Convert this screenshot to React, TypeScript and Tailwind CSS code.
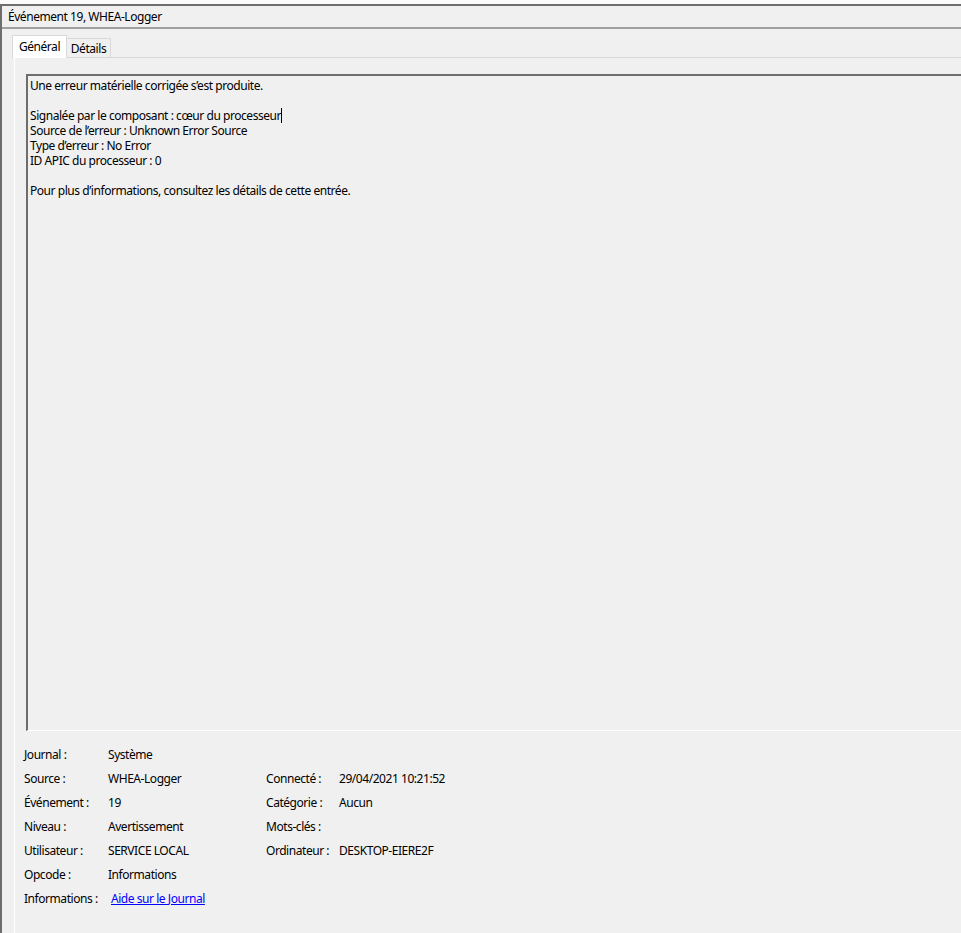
import React from "react";

const font = { fontFamily: '"Noto Sans", "Liberation Sans", sans-serif' };

const rows: [string, React.ReactNode, string?, string?][] = [
  ["Journal :", "Système"],
  ["Source :", "WHEA-Logger", "Connecté :", "29/04/2021 10:21:52"],
  ["Événement :", "19", "Catégorie :", "Aucun"],
  ["Niveau :", "Avertissement", "Mots-clés :", ""],
  ["Utilisateur :", "SERVICE LOCAL", "Ordinateur :", "DESKTOP-EIERE2F"],
  ["Opcode :", "Informations"],
  [
    "Informations :",
    <a href="#" className="ml-[3px] text-[#0000ff] underline">
      Aide sur le Journal
    </a>,
  ],
];

export default function App() {
  return (
    <div
      className="w-[961px] h-[933px] overflow-hidden bg-[#fbfbfb] pt-[4px] text-[12px] leading-[15px] tracking-[-0.45px] text-black"
      style={font}
    >
      <div className="h-[929px] border-t-2 border-l-2 border-[#6e6e6e] bg-[#f0f0f0] flex flex-col">
        {/* Titre */}
        <div className="h-[23px] shrink-0 border-b-2 border-[#a0a0a0] pl-[6px] flex items-center">
          Événement 19, WHEA-Logger
        </div>

        {/* Onglets */}
        <div className="h-[28px] shrink-0 flex items-end pl-[10px]">
          <div className="relative z-10 h-[23px] w-[55px] -mb-px bg-white border-l border-t border-r border-[#d9d9d9] flex items-center justify-center pb-[1px]">
            Général
          </div>
          <div className="h-[19px] w-[44px] border-t border-r border-[#d9d9d9] flex items-center justify-center">
            Détails
          </div>
        </div>

        {/* Page Général */}
        <div className="flex-1 ml-[12px] w-[1000px] border-t border-l border-t-[#d9d9d9] border-l-white flex flex-col">
          <div className="ml-[11px] mt-[16px] h-[657px] shrink-0 border-t-2 border-l-2 border-[#6d6d6d] border-b border-b-white pl-[2px] pt-[2px]">
            <p>Une erreur matérielle corrigée s’est produite.</p>
            <p>&nbsp;</p>
            <p>
              Signalée par le composant : cœur du processeur
              <span className="inline-block w-px h-[15px] bg-black align-top" />
            </p>
            <p>Source de l’erreur : Unknown Error Source</p>
            <p>Type d’erreur : No Error</p>
            <p>ID APIC du processeur : 0</p>
            <p>&nbsp;</p>
            <p>Pour plus d’informations, consultez les détails de cette entrée.</p>
          </div>

          <div className="mt-[11px] ml-[9px] grid grid-cols-[84px_158px_73px_auto] auto-rows-[24px] items-center">
            {rows.map(([l1, v1, l2, v2], i) => (
              <React.Fragment key={i}>
                <span>{l1}</span>
                <span>{v1}</span>
                <span>{l2 ?? ""}</span>
                <span>{v2 ?? ""}</span>
              </React.Fragment>
            ))}
          </div>
        </div>
      </div>
    </div>
  );
}
